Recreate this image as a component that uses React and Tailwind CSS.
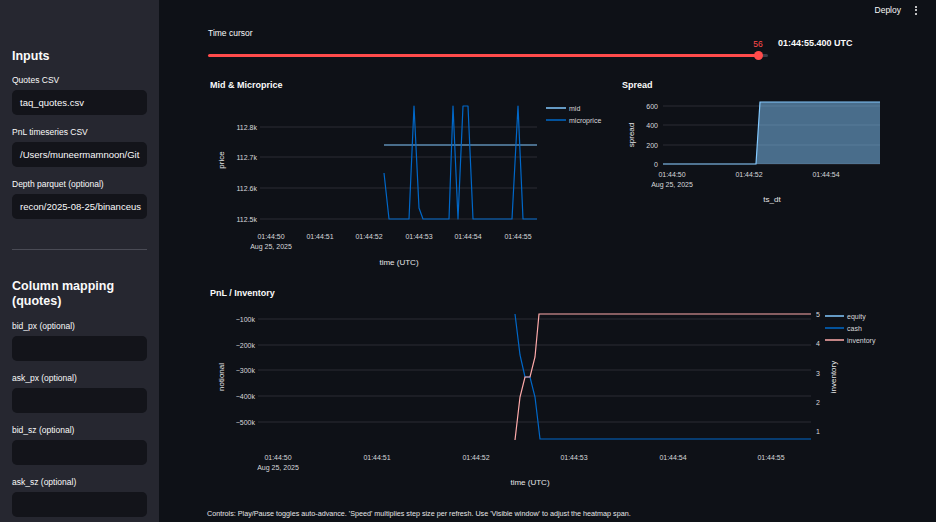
const fields = [
  { label: "bid_px (optional)" },
  { label: "ask_px (optional)" },
  { label: "bid_sz (optional)" },
  { label: "ask_sz (optional)" },
];

function Field({ label, value }) {
  return (
    <div className="flex flex-col gap-[4px]">
      <div className="h-[12px] text-[8.5px] leading-[12px] text-[#fafafa]">{label}</div>
      <div className="h-[25px] rounded-[5px] bg-[#13141a] px-[8px] text-[9.5px] leading-[25px] text-[#fafafa] whitespace-nowrap overflow-hidden">
        {value}
      </div>
    </div>
  );
}

function Sidebar() {
  return (
    <aside className="w-[159px] shrink-0 h-[522px] overflow-hidden bg-[#262730] px-[12px] pt-[48px]">
      <h2 className="text-[12.5px] font-bold leading-[16px] text-[#fafafa]">Inputs</h2>
      <div className="mt-[10px] flex flex-col gap-[11px]">
        <Field label="Quotes CSV" value="taq_quotes.csv" />
        <Field label="PnL timeseries CSV" value="/Users/muneermamnoon/Git" />
        <Field label="Depth parquet (optional)" value="recon/2025-08-25/binanceus" />
      </div>
      <div className="mt-[30px] h-px bg-[#4a4b55]" />
      <h2 className="mt-[29px] text-[12.5px] font-bold leading-[15px] text-[#fafafa]">
        Column mapping
        <br />
        (quotes)
      </h2>
      <div className="mt-[11px] flex flex-col gap-[11px]">
        {fields.map((f) => (
          <Field key={f.label} label={f.label} value="" />
        ))}
      </div>
    </aside>
  );
}

const AX = "fill-[#d8d8db] text-[7px]";
const TT = "fill-[#e6e6e8] text-[8px]";
const GRID = "#2b2d35";

function MidChart() {
  const ys = [
    ["112.8k", 127],
    ["112.7k", 157],
    ["112.6k", 188],
    ["112.5k", 219],
  ];
  const xs = [
    ["01:44:50", 271],
    ["01:44:51", 320],
    ["01:44:52", 369],
    ["01:44:53", 419],
    ["01:44:54", 468],
    ["01:44:55", 518],
  ];
  const micro =
    "M384 173 L389 219 H409 L414 106 L419 208 L423 219 H449 L453 106 L458 219 L463 106 H468 L473 219 H512 L518 106 L523 219 H537";
  return (
    <svg width="412" height="175" viewBox="200 95 412 175" className="block">
      {ys.map(([t, y]) => (
        <g key={t}>
          <line x1="260" x2="537" y1={y} y2={y} stroke={GRID} strokeWidth="1" />
          <text x="257" y={y + 2.5} textAnchor="end" className={AX}>{t}</text>
        </g>
      ))}
      <text transform="translate(224 160) rotate(-90)" textAnchor="middle" className={TT}>price</text>
      {xs.map(([t, x]) => (
        <text key={t} x={x} y="238.5" textAnchor="middle" className={AX}>{t}</text>
      ))}
      <text x="271" y="248.5" textAnchor="middle" className={AX}>Aug 25, 2025</text>
      <text x="399" y="265" textAnchor="middle" className={TT}>time (UTC)</text>
      <path d="M384 145 H537" stroke="#83c9ff" strokeWidth="1.2" fill="none" />
      <path d={micro} stroke="#0068c9" strokeWidth="1.2" fill="none" strokeLinejoin="round" />
      <line x1="546" x2="566" y1="108" y2="108" stroke="#83c9ff" strokeWidth="1.5" />
      <text x="569" y="110.5" className={AX}>mid</text>
      <line x1="546" x2="566" y1="120" y2="120" stroke="#0068c9" strokeWidth="1.5" />
      <text x="569" y="122.5" className={AX}>microprice</text>
    </svg>
  );
}

function SpreadChart() {
  const ys = [
    ["600", 106],
    ["400", 125],
    ["200", 145],
    ["0", 164],
  ];
  return (
    <svg width="288" height="115" viewBox="612 95 288 115" className="block">
      {ys.map(([t, y]) => (
        <g key={t}>
          <line x1="663" x2="880" y1={y} y2={y} stroke={GRID} strokeWidth="1" />
          <text x="658" y={y + 2.5} textAnchor="end" className={AX}>{t}</text>
        </g>
      ))}
      <text transform="translate(634 135) rotate(-90)" textAnchor="middle" className={TT}>spread</text>
      <path d="M756 164 L760 102 H880 V164 Z" fill="#83c9ff" fillOpacity="0.5" />
      <path d="M663 164 H756 L760 102 H880" stroke="#83c9ff" strokeWidth="1.2" fill="none" />
      <text x="672" y="176.5" textAnchor="middle" className={AX}>01:44:50</text>
      <text x="749" y="176.5" textAnchor="middle" className={AX}>01:44:52</text>
      <text x="826" y="176.5" textAnchor="middle" className={AX}>01:44:54</text>
      <text x="672" y="186.5" textAnchor="middle" className={AX}>Aug 25, 2025</text>
      <text x="772" y="202" textAnchor="middle" className={TT}>ts_dt</text>
    </svg>
  );
}

function PnlChart() {
  const ys = [
    ["−100k", 319],
    ["−200k", 345],
    ["−300k", 370],
    ["−400k", 396],
    ["−500k", 422],
  ];
  const rs = [
    ["5", 314],
    ["4", 343],
    ["3", 373],
    ["2", 402],
    ["1", 431],
  ];
  const xs = [
    ["01:44:50", 278],
    ["01:44:51", 377],
    ["01:44:52", 476],
    ["01:44:53", 574],
    ["01:44:54", 673],
    ["01:44:55", 771],
  ];
  return (
    <svg width="700" height="192" viewBox="200 300 700 192" className="block">
      {ys.map(([t, y]) => (
        <g key={t}>
          <line x1="258" x2="811" y1={y} y2={y} stroke={GRID} strokeWidth="1" />
          <text x="255" y={y + 2.5} textAnchor="end" className={AX}>{t}</text>
        </g>
      ))}
      {rs.map(([t, y]) => (
        <text key={t} x="816" y={y + 2.5} className={AX}>{t}</text>
      ))}
      <text transform="translate(224 377) rotate(-90)" textAnchor="middle" className={TT}>notional</text>
      <text transform="translate(836 377) rotate(-90)" textAnchor="middle" className={TT}>inventory</text>
      {xs.map(([t, x]) => (
        <text key={t} x={x} y="459.5" textAnchor="middle" className={AX}>{t}</text>
      ))}
      <text x="278" y="469.5" textAnchor="middle" className={AX}>Aug 25, 2025</text>
      <text x="530" y="485" textAnchor="middle" className={TT}>time (UTC)</text>
      <path d="M515 314 L520 355 L525 377 H530 L535 397 L540 439 H811" stroke="#0068c9" strokeWidth="1.2" fill="none" />
      <path d="M515 440 L520 397 L525 377 H530 L535 357 L539 314 H811" stroke="#ffabab" strokeWidth="1.2" fill="none" />
      <line x1="825" x2="844" y1="316" y2="316" stroke="#83c9ff" strokeWidth="1.5" />
      <text x="847" y="318.5" className={AX}>equity</text>
      <line x1="825" x2="844" y1="328" y2="328" stroke="#0068c9" strokeWidth="1.5" />
      <text x="847" y="330.5" className={AX}>cash</text>
      <line x1="825" x2="844" y1="340" y2="340" stroke="#ffabab" strokeWidth="1.5" />
      <text x="847" y="342.5" className={AX}>inventory</text>
    </svg>
  );
}

function TimeCursor() {
  return (
    <div className="mt-[8px] ml-[8px] flex items-start">
      <div className="w-[560px]">
        <div className="h-[10px] text-[8.5px] leading-[10px] text-[#fafafa]">Time cursor</div>
        <div className="relative h-[24px]">
          <div className="absolute left-[542px] top-[1px] w-[16px] text-center text-[8.5px] leading-[10px] text-[#ff4b4b]">56</div>
          <div className="absolute left-0 top-[16px] h-[3px] w-[550px] rounded-full bg-[#ff4b4b]" />
          <div className="absolute left-[550px] top-[16px] h-[3px] w-[10px] rounded-full bg-[#3a3c47]" />
          <div className="absolute left-[545.5px] top-[13px] h-[9px] w-[9px] rounded-full bg-[#ff4b4b]" />
        </div>
      </div>
      <div className="ml-[10px] mt-[9px] text-[9px] font-semibold leading-[12px] text-[#fafafa]">01:44:55.400 UTC</div>
    </div>
  );
}

export default function App() {
  return (
    <div className="flex h-[522px] w-[936px] overflow-hidden bg-[#0e1117] font-['Liberation_Sans',Arial,sans-serif]">
      <Sidebar />
      <main className="flex-1 pl-[41px]">
        <header className="flex h-[20px] items-center justify-end pr-[19px] text-[8.5px] text-[#fafafa]">
          <span>Deploy</span>
          <span className="ml-[14px] flex flex-col gap-[1.5px]">
            <span className="h-[2px] w-[2px] rounded-full bg-[#fafafa]" />
            <span className="h-[2px] w-[2px] rounded-full bg-[#fafafa]" />
            <span className="h-[2px] w-[2px] rounded-full bg-[#fafafa]" />
          </span>
        </header>
        <TimeCursor />
        <div className="mt-[18px] flex">
          <section className="w-[412px]">
            <h3 className="pl-[10px] text-[9px] font-bold leading-[10px] text-[#fafafa]">Mid &amp; Microprice</h3>
            <div className="mt-[5px]">
              <MidChart />
            </div>
          </section>
          <section className="w-[288px]">
            <h3 className="pl-[10px] text-[9px] font-bold leading-[10px] text-[#fafafa]">Spread</h3>
            <div className="mt-[5px]">
              <SpreadChart />
            </div>
          </section>
        </div>
        <h3 className="mt-[18px] pl-[10px] text-[9px] font-bold leading-[10px] text-[#fafafa]">PnL / Inventory</h3>
        <div className="mt-[2px]">
          <PnlChart />
        </div>
        <p className="mt-[17px] pl-[7px] text-[7.2px] leading-[10px] text-[#e6e6e8] whitespace-nowrap">
          Controls: Play/Pause toggles auto-advance. 'Speed' multiplies step size per refresh. Use 'Visible window' to adjust the heatmap span.
        </p>
      </main>
    </div>
  );
}
